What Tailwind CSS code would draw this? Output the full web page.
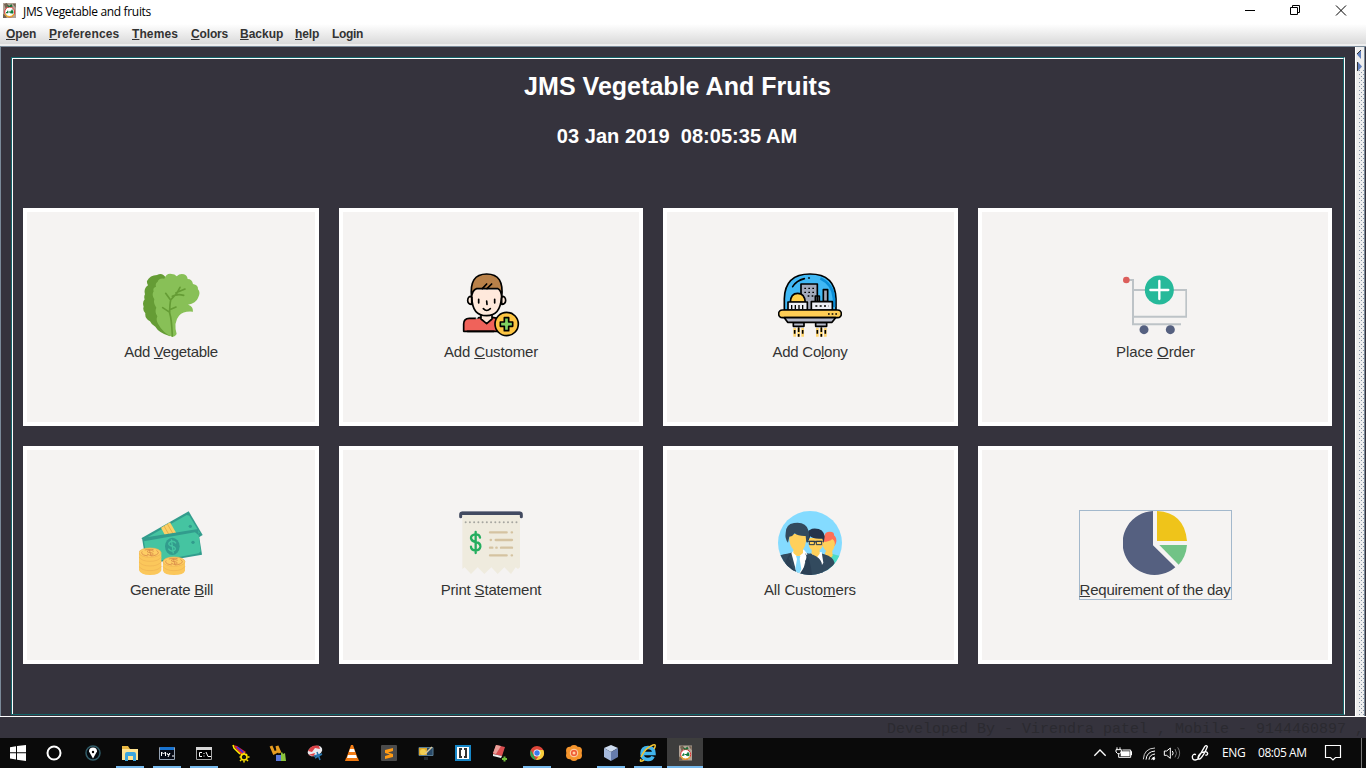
<!DOCTYPE html>
<html lang="en">
<head>
<meta charset="utf-8">
<title>JMS Vegetable and fruits</title>
<script src="https://cdn.jsdelivr.net/npm/@tailwindcss/browser@4"></script>
</head>
<body class="w-[1366px] h-[768px] overflow-hidden flex flex-col bg-[#35333d] font-['Liberation_Sans',Arial,sans-serif]">
<svg width="0" height="0" class="hidden">
  <symbol id="app" viewBox="0 0 39 45">
    <path fill="#b3a497" d="M0 0h39v45H0z"/><path fill="#756453" d="M3 4l8-4 6 8-9 9zM29 2h9v12zM0 33l9 4 2 8H0z"/>
    <circle cx="20" cy="27" r="15" fill="#fff" stroke="#d33" stroke-width="3"/>
    <path d="M6 32a15 15 0 0 0 27 1" fill="none" stroke="#e8ac32" stroke-width="4"/>
    <path fill="#176d35" d="M12 5l7 4 6-6 4 8-13 2z"/>
    <path fill="none" stroke="#117b3b" stroke-width="3.500" d="M14 23v6h-5M17 27h6M23 31l2-7 2 5 2-5 1 7"/>
  </symbol>
</svg>

<header class="h-6 shrink-0 bg-white flex items-center">
  <svg class="ml-[3px] w-[13px] h-[15px] mt-[-3px]"><use href="#app"/></svg>
  <div class="ml-[7px] text-[12px] leading-6 text-black font-['Open_Sans','Noto_Sans',sans-serif] tracking-[-0.33px] whitespace-nowrap">JMS Vegetable and fruits</div>
  <svg class="ml-auto mr-[18px] mt-[-4px]" width="103" height="12" viewBox="0 0 103 12" fill="none" stroke="#000">
    <path d="M0 6.500h10M45.500 3.500h7v7h-7zM47.500 3.500v-2h7v7h-2M91 1.500l10 10M101 1.500l-10 10"/>
  </svg>
</header>
<nav class="h-5 shrink-0 bg-linear-to-b from-white to-[#dadada] flex items-center pl-[6px] text-[12px] leading-5 font-bold text-[#333] whitespace-nowrap">
  <span class="w-[43px] tracking-[-0.1px]"><u>O</u>pen</span><span class="w-[83px] tracking-[0.15px]"><u>P</u>references</span><span class="w-[59px] tracking-[0.1px]"><u>T</u>hemes</span><span class="w-[49px] tracking-[-0.15px]"><u>C</u>olors</span><span class="w-[55px]"><u>B</u>ackup</span><span class="w-[37px] tracking-[-0.15px]"><u>h</u>elp</span><span class="tracking-[-0.3px]">Login</span>
</nav>
<div class="h-0.5 shrink-0 bg-[#eeeeee]"></div>

<main class="h-[670px] shrink-0 flex border-t border-l border-[#7a8a99]">
  <section class="ml-[10px] mt-[10px] w-[1334px] h-[658px] shrink-0 border-t border-l border-b border-r border-t-[#13666b] border-l-[#13666b] border-b-[#13666b] border-r-white">
    <div class="h-full border-t border-l border-t-white border-l-white border-r border-r-[#13666b] flex flex-col items-center text-white font-bold">
      <h1 class="mt-[11px] h-[32px] leading-[32px] text-[25px] tracking-[0.03px] mr-px">JMS Vegetable And Fruits</h1>
      <div class="mt-[21px] h-[26px] leading-[26px] text-[20px] tracking-[0.04px] whitespace-pre mr-[2px]">03 Jan 2019  08:05:35 AM</div>
      <div class="mt-[59px] w-full pl-[10px] grid grid-cols-[296px_304px_295px_354px] grid-rows-[218px_218px] gap-5 text-[15px] leading-[18px] font-normal text-[#333]">
        <div class="border-4 border-white bg-[#f5f3f2] pt-[61px] flex flex-col items-center">
          <svg width="64" height="64" viewBox="57 24 192 192">
            <path fill="#659c35" d="M137 38Q128 22 111 30Q90 30 81 48Q80 54 84 61Q70 71 75 88Q71 94 74 103Q66 112 71 125Q67 135 76 145Q74 160 90 169Q94 179 106 185Q116 203 150 214Z"/>
            <path fill="#88c057" d="M157 216Q128 203 114 176Q107 166 112 154Q103 139 109 128Q99 114 103 103Q94 89 101 79Q97 69 108 65Q105 55 113 50Q117 38 133 41Q139 24 155 27Q164 27 170 34Q180 24 192 28Q202 32 203 42Q216 42 219 57Q235 60 234 73Q243 83 234 99Q228 115 204 119Q220 123 219 140Q191 137 177 152Q160 172 170 207Q166 215 157 216Z"/>
            <path d="M157 213q-2-50-8-69 0-25 3-39l19-21 9-17M168 83l27-11M150 103l-13-18M157 94q15-8 34-3M146 140l-18-12M149 134l19-8" fill="none" stroke="#659c35" stroke-width="5" stroke-linecap="round"/>
          </svg>
          <div class="mt-[6px] tracking-[-0.32px]">Add <u>V</u>egetable</div>
        </div>
        <div class="border-4 border-white bg-[#f5f3f2] pt-[61px] flex flex-col items-center">
          <svg width="64" height="64" viewBox="72 24 192 192" stroke-linecap="round" stroke-linejoin="round">
            <path fill="#f0625a" stroke="#000" stroke-width="5" d="M86 199v-22q0-17 17-17h17l18-3 17 15 17-15 20 4 10 38z"/>
            <path fill="#ffe9dc" stroke="#000" stroke-width="5" d="M138 150v12l17 14 16-14v-12zM110 94q-12-1-12 13 1 11 12 11zM200 94q12-1 12 13-1 11-12 11z"/>
            <path fill="#ffe9dc" d="M111 75h88v30q-5 48-43 48-40 0-45-48z"/>
            <path fill="#b98149" stroke="#000" stroke-width="5" d="M110 98q-9-71 45-71t45 71q-1-23-11-27h-64q-14 4-15 27z"/>
            <path fill="none" stroke="#000" stroke-width="5" d="M111 98q0 54 44 54 41 0 44-53M142 71l13-14M156 71l14-14M131 103v11M179 103v11M155 108l1 10M145 131q10 11 21 0M97 199h80"/>
            <path stroke="#f5f3f2" stroke-width="5" d="M124 159l2-1"/>
            <circle cx="215" cy="177" r="35" fill="#fdc543" stroke="#000" stroke-width="5"/>
            <path fill="#80d261" stroke="#000" stroke-width="5" d="M208 158h13v13h12v13h-12v13h-13v-13h-12v-13h12z"/>
          </svg>
          <div class="mt-[6px] tracking-[-0.15px]">Add <u>C</u>ustomer</div>
        </div>
        <div class="border-4 border-white bg-[#f5f3f2] pt-[61px] pr-px flex flex-col items-center">
          <svg width="64" height="64" viewBox="69 24 192 192" stroke="#000" stroke-width="5" stroke-linejoin="round">
            <path fill="#40b8f5" d="M88 136v-35q2-74 77-74t78 74v35z"/>
            <path fill="none" stroke="#0c8ed7" stroke-width="8" d="M196 40q38 18 41 61v25"/>
            <path fill="#a3a9ba" d="M138 135V57h49v78zM181 112V93h12v18M205 110V74h13v36z"/>
            <path fill="#ffcf4b" d="M106 112q1-27 22-27t23 27z"/>
            <path fill="#eceef5" d="M99 135v-24h58v24zM169 135v-25h63v25z"/>
            <path fill="none" stroke-width="4" d="M148 70h30M148 82h30M158 93h20" stroke-dasharray="5 7"/>
            <path fill="none" stroke-width="4" d="M110 120v12M121 120v12M132 120v12M143 120v12"/>
            <path fill="none" stroke-width="5" stroke-dasharray="6 7" d="M181 123h40"/>
            <path fill="none" stroke-linecap="round" d="M113 65q11-18 35-24M161 39h2"/>
            <rect fill="#ffcd55" x="71" y="135" width="188" height="23" rx="11"/>
            <path fill="#b5b9c8" d="M88 158h154l-11 14H98zM115 173h32v11h-32zM182 173h33v11h-33z"/>
            <path fill="none" stroke-dasharray="5 6" d="M219 147h31"/>
            <path fill="none" stroke="#ffd46d" stroke-width="8" d="M119 189v26M131 189v26M143 189v26M187 189v26M199 189v26M211 189v26"/>
            <path fill="none" d="M131 187v14M131 207v8M199 187v14M199 207v8M119 195v11M143 195v11M187 195v11M211 195v11" stroke-width="5"/>
          </svg>
          <div class="mt-[6px] tracking-[-0.25px]">Add Co<u>l</u>ony</div>
        </div>
        <div class="border-4 border-white bg-[#f5f3f2] pt-[61px] flex flex-col items-center">
          <svg width="64" height="64" viewBox="69 24 192 192">
            <path fill="none" stroke="#bdc3c7" stroke-width="6" d="M80 45h19v133h144M99 75h160v80H99"/>
            <circle cx="79" cy="45" r="10" fill="#dc5e5b"/><circle cx="132" cy="194" r="13.500" fill="#556080"/><circle cx="211" cy="194" r="13.500" fill="#556080"/>
            <circle cx="178" cy="75" r="43.500" fill="#26b99a"/><path stroke="#fff" stroke-width="7" stroke-linecap="round" d="M151 75h54M178 48v54"/>
          </svg>
          <div class="mt-[6px] pl-px tracking-[-0.1px]">Place <u>O</u>rder</div>
        </div>
        <div class="border-4 border-white bg-[#f5f3f2] pt-[61px] flex flex-col items-center">
          <svg width="64" height="64" viewBox="57 24 192 192">
            <path fill="#329c8d" d="M64 106L206 25l42 71-100 60z"/><path fill="#45c4a1" d="M77 106l123-70 8 2 30 50-2 8-96 50z"/>
            <path fill="#fbd067" d="M123 74l27-16 19 33-28 17z"/><path stroke="#e8b04a" stroke-width="3" d="M132 69l20 35M142 63l20 34"/>
            <path fill="#329c8d" d="M66 105l168-27 12 77-167 29z"/><path fill="#45c4a1" d="M72 115l153-27 11 9 6 48-6 6-143 27-12-6z"/>
            <circle cx="211" cy="70" r="5" fill="#329c8d"/><circle cx="219" cy="118" r="5" fill="#329c8d"/>
            <ellipse cx="157" cy="130" rx="22" ry="26" fill="#329c8d"/>
            <path fill="none" stroke="#45c4a1" stroke-width="4" d="M168 121q-6-9-16-5-11 7-1 12l12 4q8 8-4 12-9 2-14-7M154 109l6 42"/>
            <path fill="#fbc75b" d="M57 149h67v53q-4 14-34 14-28 0-33-14zM129 176h66v27q-4 13-33 13-29 0-33-13z"/>
            <g fill="#fdcd64" stroke="#efb253" stroke-width="2"><path fill="none" d="M57 162q8 13 33 13t34-13M57 176q8 13 33 13t34-13M57 190q8 13 33 13t34-13M129 190q8 13 33 13t33-13"/><ellipse cx="90" cy="149" rx="33" ry="14"/><ellipse cx="162" cy="176" rx="33" ry="14"/></g>
            <g fill="none" stroke="#d98a48" stroke-width="2.500"><ellipse cx="90" cy="149" rx="25" ry="10" stroke-dasharray="26 9"/><ellipse cx="162" cy="176" rx="25" ry="10" stroke-dasharray="26 9"/><path d="M101 145q-13-7-20 0 2 4 11 4 12 2 5 7-9 3-16-3M88 140l5 19M173 172q-13-7-20 0 2 4 11 4 12 2 5 7-9 3-16-3M160 167l5 19"/></g>
          </svg>
          <div class="mt-[6px] pl-px tracking-[-0.28px]">Generate <u>B</u>ill</div>
        </div>
        <div class="border-4 border-white bg-[#f5f3f2] pt-[61px] flex flex-col items-center">
          <svg width="64" height="64" viewBox="72 24 192 192">
            <path fill="#efebde" d="M82 30h173v163l-6 5-7-5-14 20-20-20-20 20-19-20-21 20-20-20-20 20-19-20-7 5z"/>
            <path fill="none" stroke="#424a60" stroke-width="9" stroke-linecap="round" d="M77 41v-6q0-5 5-5h172q5 0 5 5v6"/>
            <path fill="#424a60" d="M80 26h176v10H80z"/>
            <path stroke="#a6a6a0" stroke-width="6" stroke-linecap="round" stroke-dasharray="0 12.700" d="M92 58h156"/>
            <path fill="none" stroke="#24ae5f" stroke-width="7" stroke-linecap="round" d="M135 104q-1-10-13-10-14 1-14 11 1 9 14 12 15 3 14 14-2 11-14 11-14-1-14-11M122 87v63"/>
            <path fill="none" stroke="#d5c3a1" stroke-width="7" stroke-linecap="round" d="M165 88h50M230 88h1M167 111h1M182 111h49M165 134h7M184 134h1M198 134h33M165 157h50M230 157h1"/>
          </svg>
          <div class="mt-[6px] tracking-[-0.18px]">Print <u>S</u>tatement</div>
        </div>
        <div class="border-4 border-white bg-[#f5f3f2] pt-[61px] pr-px flex flex-col items-center">
          <svg width="64" height="64" viewBox="69 24 192 192">
            <clipPath id="c"><circle cx="165" cy="120" r="96"/></clipPath>
            <g clip-path="url(#c)"><path fill="#84dbff" d="M69 24h192v192H69z"/>
            <path fill="#4cdbc4" d="M224 151l31 8v57h-41z"/><path fill="#ffd05b" d="M218 135h13l2 23-12 14-12-20z"/>
            <path fill="#ff7058" d="M210 94q3-9 15-8 14 1 12 11 10 8 6 23l-4 9h-37V107z"/><path fill="#ffd05b" d="M203 117q22-1 29-9 10 7 7 20-5 19-16 19-14-2-20-18z"/>
            <path fill="#324a5e" d="M157 154l27-7 24 7q28 8 31 27v35h-74z"/><path fill="#fff" d="M169 150l31-3 5 32-13 21z"/>
            <path fill="#ffd05b" d="M170 135h24v17l-9 12-15-12zM161 105h43v15q-2 25-23 25-18-2-20-21z"/>
            <path fill="#24344b" d="M157 120q-9-36 14-43 35-4 38 24l-3 20-4-14q-29 2-36-7z"/>
            <path fill="none" stroke="#24344b" stroke-width="3" d="M163 115h15v10h-15zM184 115h16v10h-16zM178 117h6M158 115h45"/>
            <path fill="#324a5e" d="M69 164q6-10 27-12l18-4h32l28 7q20 7 26 24l5 37H69z"/>
            <path fill="#fff" d="M109 150l10-10h28l10 13-15 57h-17z"/><path fill="#ffd05b" d="M115 128h29v22l-15 13-14-13z"/>
            <path fill="#ffd05b" d="M103 93h50v22q-4 31-24 31-22-3-26-34z"/>
            <path fill="#324a5e" d="M99 119q-10-11-7-29 0-26 25-30 36-5 43 22 7 21-6 37l-2-20q-22 1-33-8-5 9-16 10z"/>
            <path fill="#84dbff" d="M123 159h13l-2 9 5 30-8 18h-3l-7-18 5-30z"/><path fill="#2b4055" d="M109 149l-8 19 8 7-3 8 22 33H83q6-51 26-67zM150 149l7 18-7 7 4 8-22 34h39q-5-51-21-67z"/></g>
          </svg>
          <div class="mt-[6px] tracking-[-0.1px]">All Custo<u>m</u>ers</div>
        </div>
        <div class="border-4 border-white bg-[#f5f3f2] pt-[60px] flex flex-col items-center">
          <div class="w-[153px] h-[90px] border border-[#a3b8cc] flex flex-col items-center whitespace-nowrap">
            <svg class="shrink-0" width="64" height="64" viewBox="159 24 192 192">
              <path fill="#556080" d="M249 24v103l67 66A96 96 0 1 1 249 24z"/><path fill="#efc41a" d="M261 24q83 5 90 90h-90z"/><path fill="#71c386" d="M268 126h83q-3 36-25 59z"/>
            </svg>
            <div class="mt-[6px] tracking-[-0.23px]"><u>R</u>equirement of the day</div>
          </div>
        </div>
      </div>
    </div>
  </section>
  <aside class="ml-[10px] w-[9px] h-[669px] bg-[#eeeeee] border-l border-white shrink-0">
    <svg width="8" height="669">
      <defs><pattern id="dots" width="4" height="4" patternUnits="userSpaceOnUse"><path fill="#8795a8" d="M1 1h1v1H1zM3 3h1v1H3z"/></pattern></defs>
      <path fill="url(#dots)" d="M3 22h5v647H3z"/>
      <path fill="#6382bf" d="M5 3v9L1 7.500zM2 15v9l4-4.500z"/><path fill="none" stroke="#333" d="M5 3L1 7M1.500 15v9"/>
    </svg>
  </aside>
  <div class="w-px h-full bg-[#7a8a99]"></div>
</main>
<footer class="h-[22px] shrink-0 border-t border-white overflow-hidden pl-[887px] whitespace-nowrap text-[15px] leading-[25px] text-[#2b2a30] font-['Courier_New','Liberation_Mono',monospace]">Developed By - Virendra patel , Mobile - 9144460897 ,</footer>

<div class="h-[30px] shrink-0 bg-[#0a0a0a] flex">
  <div class="w-[36px] flex items-center justify-center"><svg width="24" height="24" fill="#fff"><path d="M4 6.200l6-.9v6H4zM11 5.100L20 4v7.300h-9zM4 12.300h6v6.200l-6-1zM11 12.300h9V20l-9-1.300z"/></svg></div>
  <div class="w-[38px] flex items-center justify-center"><svg width="24" height="24"><circle cx="11" cy="12" r="6.500" fill="none" stroke="#fff" stroke-width="2"/></svg></div>
  <div class="w-[37px] flex items-center justify-center"><svg width="24" height="24"><circle cx="12" cy="12" r="7" fill="#050b10" stroke="#315c68" stroke-width="1.500"/><path fill="#fff" d="M12 17.500L8 10.500a4 4 0 1 1 8 0z"/><circle cx="12" cy="11" r="1.200"/></svg></div>
  <div class="w-[37px] flex flex-col items-center justify-between pt-[3px]"><svg width="28" height="24"><path fill="#e9b843" d="M6 5h6l2 3h8v11H6z"/><path fill="#ffe391" d="M6 8h16v11H6z"/><path fill="#3ba5dd" d="M9 20v-7q0-2 2-2h7q2 0 2 2v7h-3v-5h-5v5z"/></svg><i class="w-7 h-0.5 bg-[#76b9ed]"></i></div>
  <div class="w-[37px] flex flex-col items-center justify-between pt-[3px]"><svg width="28" height="24"><path fill="#050914" stroke="#96a3b4" d="M6.500 6.500h15v12h-15z"/><path fill="#1873d0" d="M7 6h14v3H7z"/><path fill="none" stroke="#fff" d="M8.500 15v-4l2 2 2-2v4M14 12l1 2 2-2-2 4M19 15h2"/></svg><i class="w-7 h-0.5 bg-[#76b9ed]"></i></div>
  <div class="w-[37px] flex flex-col items-center justify-between pt-[3px]"><svg width="28" height="24"><path fill="#000" stroke="#a6a6a6" d="M6.500 6.500h15v12h-15z"/><path fill="#d7d7d7" d="M6 6h16v3H6z"/><path fill="none" stroke="#fff" d="M12 11.500H9.500v4H12M14 12v1M14 14.500v1M16 11l2 4.500M18 15.500h3"/></svg><i class="w-7 h-0.5 bg-[#76b9ed]"></i></div>
  <div class="w-[37px] flex items-center justify-center"><svg width="24" height="24"><path fill="#e22a32" d="M4 4l4 1 9 6-4 4z"/><path stroke="#3428ee" stroke-width="1.500" d="M8 6l7 6"/><path stroke="#fff200" stroke-width="1.500" d="M4 4l1 3 6 6"/><circle cx="15" cy="16" r="3" fill="#111" stroke="#ffe200" stroke-width="1.500"/><path stroke="#ffe200" stroke-width="1.500" stroke-dasharray="2 6" d="M15 11.500v10M10.500 16h10M12 13l7 7M18 13l-7 7"/></svg></div>
  <div class="w-[37px] flex items-center justify-center"><svg width="24" height="24"><path fill="none" stroke="#e79d20" stroke-width="3" d="M5 5l3 7 4-2-1-5 3 7"/><path fill="#5977da" d="M10 14h5v6h-5z"/><path fill="#8cc53d" d="M15 12l1-1 1 2 2-1 1 8h-5z"/></svg></div>
  <div class="w-[37px] flex items-center justify-center"><svg width="24" height="24"><ellipse cx="12" cy="10" rx="7.500" ry="5" fill="#e9eaee" transform="rotate(-20 12 10)"/><path fill="#db4146" d="M5 10q4-7 11-5l1 3-5-1-3 4zM5 14l7-2-1 3z"/><path fill="none" stroke="#2876ad" stroke-width="1.500" d="M11 15l8-2M14 11l3 8M12 17l7-4"/></svg></div>
  <div class="w-[37px] flex items-center justify-center"><svg width="24" height="24"><path fill="#f57e16" d="M11 4h2l5 14H6z"/><path fill="#fff" d="M10 8h4l1 3H9zM8 14h8l1 3H7z"/><path fill="#ef780f" d="M6 17h12l1 3H5z"/></svg></div>
  <div class="w-[37px] flex items-center justify-center"><svg width="24" height="24"><rect x="4" y="4" width="16" height="16" rx="1" fill="#4b4b4b"/><path fill="#ff9b14" d="M8 9l8-2v3l-5 1.500 5 1.500v3l-8 2v-3l5-1.500L8 12z"/></svg></div>
  <div class="w-[37px] flex items-center justify-center"><svg width="24" height="24"><path fill="#294a69" stroke="#597c93" d="M5 6.500h14v8H5z"/><path fill="#242a2e" d="M10 16h4v3h-4z"/><path fill="#dba628" d="M5 7h8v7H5z"/><circle cx="9" cy="11" r="3" fill="#f2ce51"/><path stroke="#d8c89e" stroke-width="1.500" d="M11 13l7-7"/></svg></div>
  <div class="w-[37px] flex items-center justify-center"><svg width="24" height="24"><path fill="#1687c8" d="M4 4h16v16H4z"/><path fill="#fff" d="M6 6h12v12H6z"/><path fill="none" stroke="#333" stroke-width="2" d="M11 8H9v8h2M13 8h2v8h-2"/></svg></div>
  <div class="w-[37px] flex items-center justify-center"><svg width="24" height="24"><path fill="#d94e50" d="M8 4l9 2-3 9-9-2z"/><path fill="#eaa09a" d="M8 4l5 1-5 8-3-1z"/><path fill="#eee" d="M5 13l9 2-1 2-8-2z"/><path stroke="#72bd3c" stroke-width="2" d="M14 18h5M16.500 15.500v5"/></svg></div>
  <div class="w-[37px] flex flex-col items-center justify-between pt-[3px]"><svg width="28" height="24"><circle cx="14" cy="12" r="7" fill="#de4639"/><path fill="#2fa450" d="M7.800 9L13 18.900A7 7 0 0 1 7.800 9z"/><path fill="#f7ce3a" d="M14 9h6.300A7 7 0 0 1 13 19l4-6z"/><circle cx="14" cy="12" r="3.500" fill="#fff"/><circle cx="14" cy="12" r="2.700" fill="#3a7ded"/></svg><i class="w-7 h-0.5 bg-[#76b9ed]"></i></div>
  <div class="w-[37px] flex items-center justify-center"><svg width="24" height="24"><g fill="#f5952d"><circle cx="12" cy="8" r="4"/><circle cx="12" cy="16" r="4"/><circle cx="8" cy="9.800" r="4"/><circle cx="16" cy="9.800" r="4"/><circle cx="8" cy="14.200" r="4"/><circle cx="16" cy="14.200" r="4"/></g><circle cx="12" cy="12" r="3.800" fill="#f15a35" stroke="#ffd8ad"/><circle cx="12" cy="12" r="1.500" fill="#ffd2a2"/></svg></div>
  <div class="w-[37px] flex flex-col items-center justify-between pt-[3px]"><svg width="28" height="24"><path fill="#cedcf0" d="M7 7l7-3 7 3-7 4z"/><path fill="#a5b9dc" d="M7 7l7 4v9l-7-4z"/><path fill="#667cac" d="M21 7l-7 4v9l7-4z"/></svg><i class="w-7 h-0.5 bg-[#76b9ed]"></i></div>
  <div class="w-[38px] pr-px flex flex-col items-center justify-between pt-[3px]"><svg width="28" height="24" fill="none"><path stroke="#41b5ee" stroke-width="3.500" d="M9 12.500h11q0-6-6-6t-6 6 6 6q4 0 5-3"/><path stroke="#f4c431" stroke-width="1.500" d="M7 18q-2 4 3 1M7 16Q11 7 19 4q4-1 1 4"/></svg><i class="w-7 h-0.5 bg-[#76b9ed]"></i></div>
  <div class="w-[36px] flex flex-col justify-between items-center pt-[7px] bg-[#3d3d3d]"><svg width="13" height="16"><use href="#app"/></svg><i class="w-full h-0.5 bg-[#76b9ed]"></i></div>

  <div class="ml-auto flex text-white text-[12px] leading-[29px] font-['Open_Sans','Noto_Sans',sans-serif] whitespace-nowrap">
    <svg width="22" height="30" viewBox="630 114 66 90" fill="none" stroke="#fff" stroke-width="4"><path d="M643 167l17-17 17 17"/></svg>
    <svg width="26" height="30" viewBox="696 114 78 90" fill="none" stroke="#fff" stroke-width="3"><path d="M711 142v7M720 142v7M708 149h16v7l-5 5h-6l-5-5zM716 161v11h36v-22h-25"/><path fill="#fff" stroke="none" d="M722 154h27v15h-27zM752 154h4v12h-4z"/></svg>
    <svg width="22" height="30" viewBox="774 114 66 90" fill="none" stroke="#fff" stroke-width="3"><path stroke="#ccc" d="M790 178q2-33 35-34"/><path d="M798 179q2-24 27-26M807 179q1-15 18-17M815 179q1-7 10-8"/><circle cx="821" cy="176" r="3" fill="#fff"/></svg>
    <svg width="26" height="30" viewBox="840 114 78 90" fill="none" stroke="#fff" stroke-width="3"><path d="M853 153h7l11-9v31l-11-9h-7zM877 153q5 6 0 13"/><path stroke="#777" d="M885 147q9 13 0 25M893 142q12 17 0 35"/></svg>
    <svg width="36" height="30" viewBox="918 114 108 90" fill="none" stroke="#fff" stroke-width="4"><path d="M948 164q-9-4-11 6 0 10 9 10 9 0 10-9l18-31q5-6 8 0-10 25-21 36-8 4-7-4 3-12 14-15 14-5 15 4-1 6-7 4"/></svg>
    <div class="w-[36px] tracking-[-0.4px]">ENG</div>
    <div class="w-[62px] tracking-[-0.45px]">08:05 AM</div>
    <svg width="41" height="30" viewBox="1320 114 123 90" fill="none" stroke="#fff" stroke-width="3.500"><path d="M1336.500 136.500h45v36h-15l-7.500 7-7.500-7h-15z"/></svg>
    <div class="w-px h-[30px] bg-[#777]"></div><div class="w-1"></div>
  </div>
</div>
</body>
</html>
